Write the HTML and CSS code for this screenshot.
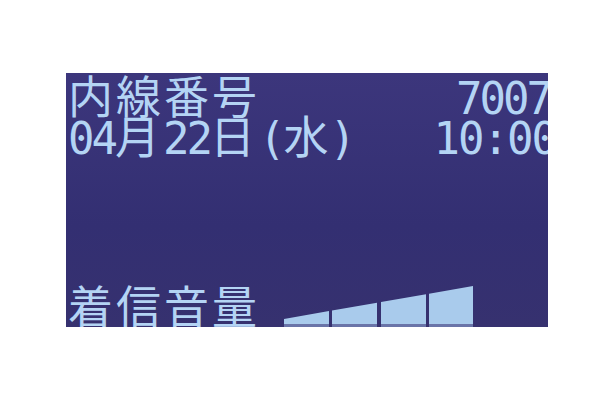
FILE: index.html
```html
<!DOCTYPE html>
<html lang="ja">
<head>
<meta charset="utf-8">
<link rel="stylesheet" href="styles.css">
</head>
<body>
<div class="screen">
  <div class="row row1">
    <span class="jp">内線番号</span>
    <span class="num">7007</span>
  </div>
  <div class="row row2">
    <span class="mixed"><span class="num">04</span><span class="jp">月</span><span class="num">22</span><span class="jp">日</span><span class="num paren">(</span><span class="jp kanji-tight">水</span><span class="num paren">)</span></span>
    <span class="num time">10:00</span>
  </div>
  <div class="row row3">
    <span class="jp">着信音量</span>
    <svg class="bars" width="190" height="41" viewBox="0 0 190 41">
      <polygon points="0,33 45,25.1 45,38 0,38" fill="#a9cbec"/>
      <polygon points="48,24.6 93,16.8 93,38 48,38" fill="#a9cbec"/>
      <polygon points="97,16.1 142,8.2 142,38 97,38" fill="#a9cbec"/>
      <polygon points="145,7.7 189,0 189,38 145,38" fill="#a9cbec"/>
      <rect x="0" y="38" width="45" height="3" fill="#6a74a8"/>
      <rect x="48" y="38" width="45" height="3" fill="#6a74a8"/>
      <rect x="97" y="38" width="45" height="3" fill="#6a74a8"/>
      <rect x="145" y="38" width="44" height="3" fill="#6a74a8"/>
    </svg>
  </div>
</div>
</body>
</html>
```
FILE: styles.css
```css
html, body {
  margin: 0;
  padding: 0;
  background: #ffffff;
}
body {
  padding: 73px 0 0 66px;
}
.screen {
  width: 482px;
  height: 254px;
  background: linear-gradient(180deg, #3c367c 0%, #332f72 60%, #36316f 100%);
  color: #b4d4f4;
  overflow: hidden;
  display: flex;
  flex-direction: column;
  box-sizing: border-box;
  padding-left: 2px;
}
.row {
  display: flex;
  justify-content: space-between;
  align-items: baseline;
  white-space: nowrap;
}
.jp {
  font-family: "Noto Sans CJK JP", "Noto Sans CJK SC", sans-serif;
  font-size: 45px;
  letter-spacing: 3px;
  line-height: 42px;
}
.num {
  font-family: "DejaVu Sans Mono", monospace;
  font-size: 44px;
  letter-spacing: -3px;
  line-height: 42px;
}
.row1 {
  height: 42px;
  margin-top: 1px;
}
.row1 .num {
  margin-right: -2px;
}
.row2 {
  height: 42px;
  margin-top: -2px;
}
.mixed {
  display: flex;
  align-items: baseline;
}
.paren {
  padding: 0 1px;
}
.kanji-tight {
  letter-spacing: 0;
}
.time {
  letter-spacing: -2px;
  margin-right: -8px;
}
.row3 {
  margin-top: auto;
  justify-content: flex-start;
  align-items: flex-end;
  height: 44px;
}
.row3 .jp {
  line-height: 44px;
}
.bars {
  display: block;
  margin-left: 24px;
}
```
